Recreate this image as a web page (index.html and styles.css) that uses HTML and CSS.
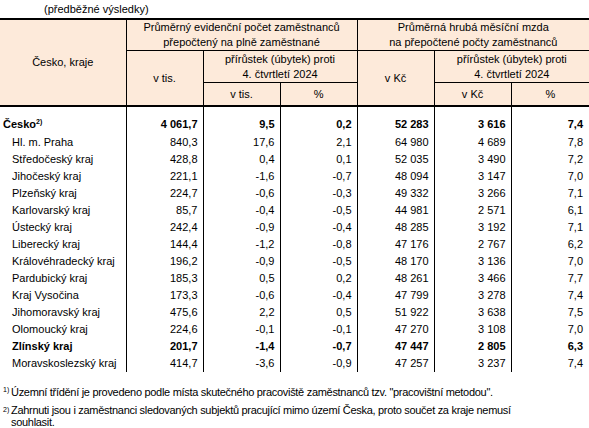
FILE: index.html
```html
<!DOCTYPE html>
<html lang="cs">
<head>
<meta charset="utf-8">
<link rel="stylesheet" href="styles.css">
</head>
<body>
<div class="caption">(předběžné výsledky)</div>
<table class="tbl">
  <colgroup>
    <col class="c-name"><col class="c-num"><col class="c-num"><col class="c-num"><col class="c-num"><col class="c-num"><col class="c-last">
  </colgroup>
  <thead>
    <tr class="h1">
      <th rowspan="3" class="first">Česko, kraje</th>
      <th colspan="3">Průměrný evidenční počet zaměstnanců<br>přepočtený na plně zaměstnané</th>
      <th colspan="3" class="last">Průměrná hrubá měsíční mzda<br>na přepočtené počty zaměstnanců</th>
    </tr>
    <tr class="h2">
      <th rowspan="2">v tis.</th>
      <th colspan="2">přírůstek (úbytek) proti<br>4. čtvrtletí 2024</th>
      <th rowspan="2">v Kč</th>
      <th colspan="2" class="last">přírůstek (úbytek) proti<br>4. čtvrtletí 2024</th>
    </tr>
    <tr class="h3">
      <th>v tis.</th>
      <th>%</th>
      <th>v Kč</th>
      <th class="last">%</th>
    </tr>
  </thead>
  <tbody>
    <tr class="total bold"><td class="name">Česko<sup>2)</sup></td><td>4 061,7</td><td>9,5</td><td>0,2</td><td>52 283</td><td>3 616</td><td class="last">7,4</td></tr>
    <tr><td class="name ind">Hl. m. Praha</td><td>840,3</td><td>17,6</td><td>2,1</td><td>64 980</td><td>4 689</td><td class="last">7,8</td></tr>
    <tr><td class="name ind">Středočeský kraj</td><td>428,8</td><td>0,4</td><td>0,1</td><td>52 035</td><td>3 490</td><td class="last">7,2</td></tr>
    <tr><td class="name ind">Jihočeský kraj</td><td>221,1</td><td>-1,6</td><td>-0,7</td><td>48 094</td><td>3 147</td><td class="last">7,0</td></tr>
    <tr><td class="name ind">Plzeňský kraj</td><td>224,7</td><td>-0,6</td><td>-0,3</td><td>49 332</td><td>3 266</td><td class="last">7,1</td></tr>
    <tr><td class="name ind">Karlovarský kraj</td><td>85,7</td><td>-0,4</td><td>-0,5</td><td>44 981</td><td>2 571</td><td class="last">6,1</td></tr>
    <tr><td class="name ind">Ústecký kraj</td><td>242,4</td><td>-0,9</td><td>-0,4</td><td>48 285</td><td>3 192</td><td class="last">7,1</td></tr>
    <tr><td class="name ind">Liberecký kraj</td><td>144,4</td><td>-1,2</td><td>-0,8</td><td>47 176</td><td>2 767</td><td class="last">6,2</td></tr>
    <tr><td class="name ind">Královéhradecký kraj</td><td>196,2</td><td>-0,9</td><td>-0,5</td><td>48 170</td><td>3 136</td><td class="last">7,0</td></tr>
    <tr><td class="name ind">Pardubický kraj</td><td>185,3</td><td>0,5</td><td>0,2</td><td>48 261</td><td>3 466</td><td class="last">7,7</td></tr>
    <tr><td class="name ind">Kraj Vysočina</td><td>173,3</td><td>-0,6</td><td>-0,4</td><td>47 799</td><td>3 278</td><td class="last">7,4</td></tr>
    <tr><td class="name ind">Jihomoravský kraj</td><td>475,6</td><td>2,2</td><td>0,5</td><td>51 922</td><td>3 638</td><td class="last">7,5</td></tr>
    <tr><td class="name ind">Olomoucký kraj</td><td>224,6</td><td>-0,1</td><td>-0,1</td><td>47 270</td><td>3 108</td><td class="last">7,0</td></tr>
    <tr class="bold"><td class="name ind">Zlínský kraj</td><td>201,7</td><td>-1,4</td><td>-0,7</td><td>47 447</td><td>2 805</td><td class="last">6,3</td></tr>
    <tr><td class="name ind">Moravskoslezský kraj</td><td>414,7</td><td>-3,6</td><td>-0,9</td><td>47 257</td><td>3 237</td><td class="last">7,4</td></tr>
  </tbody>
</table>
<div class="notes">
  <div class="note note1"><sup class="nmark">1)</sup><span class="ntext">Územní třídění je provedeno podle místa skutečného pracoviště zaměstnanců tzv. "pracovištní metodou".</span></div>
  <div class="note note2"><sup class="nmark">2)</sup><span class="ntext">Zahrnuti jsou i zaměstnanci sledovaných subjektů pracující mimo území Česka, proto součet za kraje nemusí souhlasit.</span></div>
</div>
</body>
</html>
```

FILE: styles.css
```css
html, body {
  margin: 0;
  padding: 0;
  background: #ffffff;
}
body {
  font-family: "Liberation Sans", Arial, sans-serif;
  font-size: 11px;
  color: #000000;
  width: 589px;
}
.caption {
  height: 18px;
  line-height: 18px;
  padding-left: 44px;
  box-sizing: border-box;
}
.tbl {
  width: 589px;
  border-collapse: collapse;
  table-layout: fixed;
}
.c-name { width: 126px; }
.c-num { width: 77px; }
.c-last { width: 78px; }
.tbl th {
  background: #fdeada;
  font-weight: normal;
  text-align: center;
  vertical-align: middle;
  line-height: 15px;
  padding: 0;
  border: 1px solid #000;
}
.tbl th.first { border-left: none; }
.tbl th.last { border-right: none; }
.tbl thead tr.h1 th { border-top: 2px solid #000; height: 30px; }
.tbl thead tr.h2 th { height: 31px; }
.tbl thead tr.h3 th { height: 22px; border-bottom: 2px solid #000; }
.tbl thead th[rowspan="2"] { border-bottom: 2px solid #000; }
.tbl thead th[rowspan="3"] { border-bottom: 2px solid #000; }
.tbl td {
  height: 17px;
  padding: 0 5px 0 0;
  line-height: 15px;
  text-align: right;
  border-left: 1px solid #000;
  border-right: 1px solid #000;
  white-space: nowrap;
}
.tbl td.name {
  text-align: left;
  border-left: none;
  padding: 0 0 0 3px;
}
.tbl td.ind { padding-left: 12px; }
.tbl td.last { border-right: none; padding-right: 6px; }
.tbl tr.total td {
  height: 25px;
  vertical-align: bottom;
  padding-bottom: 2px;
}
.bold td { font-weight: bold; }
.tbl sup {
  font-size: 7px;
  line-height: 0;
  vertical-align: 4px;
}
.notes {
  padding-top: 12px;
  letter-spacing: -0.3px;
}
.note {
  display: flex;
  line-height: 17px;
}
.nmark {
  width: 11px;
  padding-left: 3px;
  box-sizing: border-box;
  font-size: 7px;
  line-height: 12px;
  letter-spacing: 0;
  vertical-align: top;
  flex: none;
}
.note1 .ntext { white-space: nowrap; }
.note2 .ntext { width: 500px; }
.note2 { line-height: 12px; padding-top: 3px; }
```
